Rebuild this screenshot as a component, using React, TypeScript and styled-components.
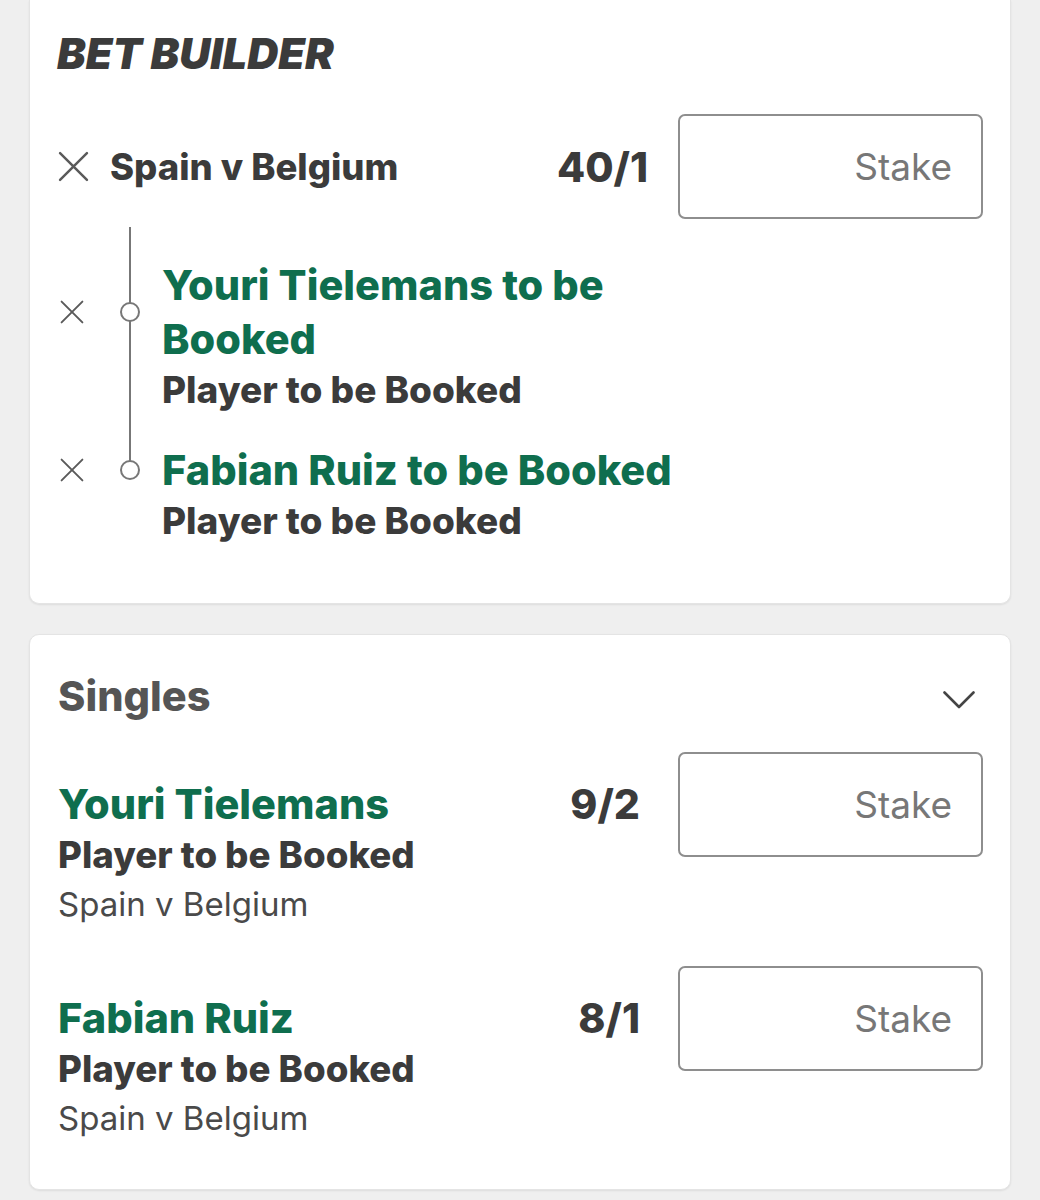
import * as React from 'react';
import styled, { createGlobalStyle } from 'styled-components';

const GlobalStyle = createGlobalStyle`
  html, body {
    margin: 0;
    padding: 0;
    background: #efefef;
  }
  body {
    font-family: Inter, "Noto Sans", "Liberation Sans", sans-serif;
    color: #3b3b3b;
  }
`;

const GREEN = '#0f6e4e';
const DARK = '#3b3b3b';

const Page = styled.div`
  display: flex;
  flex-direction: column;
  gap: 30px;
  padding: 0 29px 10px;
`;

const Card = styled.section<{ $openTop?: boolean }>`
  background: #fff;
  border: 1px solid #e4e4e4;
  border-radius: ${p => (p.$openTop ? '0 0 10px 10px' : '10px')};
  border-top: ${p => (p.$openTop ? 'none' : '1px solid #e4e4e4')};
  box-shadow: 0 1px 2px rgba(0, 0, 0, 0.08);
  padding: ${p => (p.$openTop ? '27px 27px 58px' : '37px 27px 47px')};
`;

const Title = styled.h1`
  margin: 0 0 35px;
  font-size: 43px;
  line-height: 52px;
  font-weight: 900;
  font-style: italic;
  letter-spacing: 0;
  color: ${DARK};
`;

const EventRow = styled.div`
  display: flex;
  align-items: center;
`;

const CloseButton = styled.button<{ $small?: boolean }>`
  flex: none;
  width: ${p => (p.$small ? 30 : 32)}px;
  display: flex;
  justify-content: center;
  align-items: center;
  padding: 0;
  border: none;
  background: none;
  color: #5a5a5a;
`;

const EventName = styled.div`
  flex: 1;
  margin-left: 21px;
  font-size: 36.5px;
  line-height: 44px;
  font-weight: 800;
  color: ${DARK};
`;

const Odds = styled.div<{ $gap: number }>`
  flex: none;
  margin-right: ${p => p.$gap}px;
  font-size: 41px;
  line-height: 52px;
  font-weight: 800;
  color: ${DARK};
`;

const StakeBox = styled.div`
  flex: none;
  box-sizing: border-box;
  width: 305px;
  height: 105px;
  border: 2px solid #8e8e8e;
  border-radius: 7px;
  display: flex;
  align-items: center;
  justify-content: flex-end;
  padding-right: 29px;
  font-size: 37px;
  color: #777;
`;

const Legs = styled.div`
  margin-top: 8px;
`;

const LegRow = styled.div<{ $first?: boolean }>`
  display: grid;
  grid-template-columns: 30px 75px 1fr;
  padding-top: ${p => (p.$first ? 31 : 29)}px;
`;

const Node = styled.div<{ $first?: boolean; $last?: boolean }>`
  position: relative;
  align-self: stretch;
  display: flex;
  align-items: center;
  padding-left: 33px;

  &::before {
    content: '';
    position: absolute;
    left: 42px;
    width: 2px;
    top: ${p => (p.$first ? -31 : -29)}px;
    bottom: calc(50% + 9px);
    background: #777;
  }

  &::after {
    content: '';
    display: ${p => (p.$last ? 'none' : 'block')};
    position: absolute;
    left: 42px;
    width: 2px;
    top: calc(50% + 9px);
    bottom: -48px;
    background: #777;
  }
`;

const Dot = styled.span`
  box-sizing: border-box;
  width: 20px;
  height: 20px;
  border-radius: 50%;
  border: 2px solid #777;
  background: #fff;
`;

const LegTitle = styled.div`
  max-width: 560px;
  font-size: 41.5px;
  line-height: 54px;
  font-weight: 800;
  color: ${GREEN};
`;

const Market = styled.div`
  grid-column: 3;
  font-size: 37px;
  line-height: 48px;
  font-weight: 800;
  color: ${DARK};
`;

const SinglesHead = styled.div`
  display: flex;
  align-items: center;
  justify-content: space-between;
  padding-left: 1px;
  padding-right: 8px;
  margin-bottom: 32px;
`;

const SectionName = styled.h2`
  margin: 0;
  font-size: 41.5px;
  line-height: 48px;
  font-weight: 800;
  color: #555;
`;

const Chevron = styled.svg`
  margin-top: 8px;
`;

const SingleList = styled.div`
  display: flex;
  flex-direction: column;
  gap: 38px;
`;

const SingleRow = styled.div`
  display: flex;
  align-items: flex-start;
  padding-left: 1px;
`;

const SingleInfo = styled.div`
  flex: 1;
  padding-top: 26px;
`;

const SingleOdds = styled(Odds)`
  padding-top: 26px;
`;

const Selection = styled.div`
  font-size: 41.5px;
  line-height: 52px;
  font-weight: 800;
  color: ${GREEN};
`;

const SingleMarket = styled.div`
  font-size: 36.7px;
  line-height: 50px;
  font-weight: 800;
  color: ${DARK};
`;

const Fixture = styled.div`
  font-size: 33px;
  line-height: 48px;
  font-weight: 400;
  color: #4a4a4a;
`;

function CrossIcon({ size }: { size: number }) {
  return (
    <svg width={size} height={size} viewBox="0 0 30 30" fill="none">
      <path d="M2 2 L28 28 M28 2 L2 28" stroke="currentColor" strokeWidth="2.4" strokeLinecap="round" />
    </svg>
  );
}

function ChevronDown() {
  return (
    <Chevron width="32" height="18" viewBox="0 0 32 18" fill="none">
      <path d="M1.5 1.5 L16 16 L30.5 1.5" stroke="#444" strokeWidth="2.6" strokeLinecap="round" strokeLinejoin="round" />
    </Chevron>
  );
}

const legs = [
  { title: 'Youri Tielemans to be Booked', market: 'Player to be Booked' },
  { title: 'Fabian Ruiz to be Booked', market: 'Player to be Booked' },
];

const singles = [
  { name: 'Youri Tielemans', odds: '9/2' },
  { name: 'Fabian Ruiz', odds: '8/1' },
];

export default function App() {
  return (
    <>
      <GlobalStyle />
      <Page>
        <Card $openTop>
          <Title>BET BUILDER</Title>
          <EventRow>
            <CloseButton>
              <CrossIcon size={31} />
            </CloseButton>
            <EventName>Spain v Belgium</EventName>
            <Odds $gap={30}>40/1</Odds>
            <StakeBox>Stake</StakeBox>
          </EventRow>
          <Legs>
            {legs.map((leg, i) => (
              <LegRow key={leg.title} $first={i === 0}>
                <CloseButton $small>
                  <CrossIcon size={24} />
                </CloseButton>
                <Node $first={i === 0} $last={i === legs.length - 1}>
                  <Dot />
                </Node>
                <LegTitle>{leg.title}</LegTitle>
                <Market>{leg.market}</Market>
              </LegRow>
            ))}
          </Legs>
        </Card>

        <Card>
          <SinglesHead>
            <SectionName>Singles</SectionName>
            <ChevronDown />
          </SinglesHead>
          <SingleList>
            {singles.map(s => (
              <SingleRow key={s.name}>
                <SingleInfo>
                  <Selection>{s.name}</Selection>
                  <SingleMarket>Player to be Booked</SingleMarket>
                  <Fixture>Spain v Belgium</Fixture>
                </SingleInfo>
                <SingleOdds $gap={38}>{s.odds}</SingleOdds>
                <StakeBox>Stake</StakeBox>
              </SingleRow>
            ))}
          </SingleList>
        </Card>
      </Page>
    </>
  );
}
